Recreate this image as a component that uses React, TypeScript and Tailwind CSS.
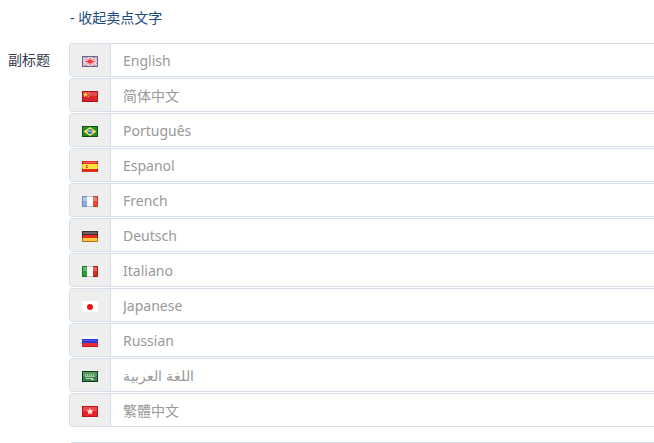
import { useState, type ReactNode } from "react";

type Language = {
  code: string;
  label: string;
  flag: ReactNode;
};

const languages: Language[] = [
  {
    code: "en",
    label: "English",
    flag: (
      <>
        <rect width="16" height="11" fill="#e9e2f0" />
        <path d="M1 1l14 9M15 1L1 10" stroke="#e8a4b0" strokeWidth="1.4" />
        <path d="M3 1.5h3M10 1.5h3M3 9.5h3M10 9.5h3M1.5 3v1M14.5 3v1M1.5 7v1M14.5 7v1" stroke="#a9a3cb" strokeWidth="1" />
        <path d="M1 5.5h14M8 1v9" stroke="#f8c4c8" strokeWidth="2.4" />
        <path d="M3 5.5h10M8 2v7" stroke="#f4484e" strokeWidth="1.2" />
        <path d="M6 4l4 3M10 4L6 7" stroke="#f42c34" strokeWidth="1.4" />
        <rect x=".5" y=".5" width="15" height="10" fill="none" stroke="#6a6590" />
      </>
    ),
  },
  {
    code: "zh-CN",
    label: "简体中文",
    flag: (
      <>
        <rect width="16" height="11" fill="#d8242a" />
        <rect x="1" y="1" width="14" height="4" fill="#e4484a" />
        <path d="M3.5 1l.9 1.6 1.8.2-1.3 1.3.4 1.8-1.8-.9-1.7.9.4-1.8-1.3-1.3 1.7-.2z" fill="#fbc64a" />
        <path d="M6 1h1v1H6zM7 3h1v1H7zM6 5h1v1H6z" fill="#f6b04a" />
        <rect x=".5" y=".5" width="15" height="10" fill="none" stroke="#a8141a" />
      </>
    ),
  },
  {
    code: "pt",
    label: "Português",
    flag: (
      <>
        <rect width="16" height="11" fill="#2c8c2c" />
        <path d="M8 1l6.4 4.5L8 10 1.6 5.5z" fill="#f2ea5c" />
        <circle cx="8" cy="5.5" r="2.5" fill="#3a6cc0" />
        <path d="M6 4.8q2-.3 4 1.2" stroke="#dcecff" strokeWidth=".9" fill="none" />
        <rect x=".5" y=".5" width="15" height="10" fill="none" stroke="#0c560c" />
      </>
    ),
  },
  {
    code: "es",
    label: "Espanol",
    flag: (
      <>
        <rect width="16" height="11" fill="#e02c22" />
        <rect y="3" width="16" height="5" fill="#fce23c" />
        <rect x="1" y="1" width="14" height="1" fill="#ee6656" />
        <path d="M4 4h2v1H5v1h1v1H4z" fill="#c86a28" />
        <path d="M.5 0v3M15.5 0v3M.5 8v3M15.5 8v3" stroke="#b81c1c" />
        <path d="M.5 3v5M15.5 3v5" stroke="#e8b020" />
      </>
    ),
  },
  {
    code: "fr",
    label: "French",
    flag: (
      <>
        <rect width="16" height="11" fill="#fafafa" />
        <rect width="5" height="11" fill="#8caede" />
        <rect x="11" width="5" height="11" fill="#e8503c" />
        <rect x="1" y="1" width="4" height="4" fill="#b0c8ec" />
        <rect x="11" y="1" width="4" height="4" fill="#f07c68" />
        <path d="M5 .5H.5v10H5" stroke="#6a8cc4" fill="none" />
        <path d="M5 .5h6M5 10.5h6" stroke="#c4c4cc" />
        <path d="M11 .5h4.5v10H11" stroke="#c03a2c" fill="none" />
      </>
    ),
  },
  {
    code: "de",
    label: "Deutsch",
    flag: (
      <>
        <rect width="16" height="4" fill="#3c3434" />
        <rect x="1" y="1" width="14" height="2" fill="#6c6464" />
        <rect y="4" width="16" height="3" fill="#e42c20" />
        <rect y="7" width="16" height="4" fill="#fcc83c" />
        <path d="M.5 0v4M15.5 0v4" stroke="#2c2424" />
        <path d="M.5 4v3M15.5 4v3" stroke="#a01c14" />
        <path d="M.5 7v3.5h15V7" stroke="#b0741c" fill="none" />
      </>
    ),
  },
  {
    code: "it",
    label: "Italiano",
    flag: (
      <>
        <rect width="16" height="11" fill="#fafafa" />
        <rect width="5" height="11" fill="#2c9c3c" />
        <rect x="11" width="5" height="11" fill="#d82c2c" />
        <rect x="1" y="1" width="4" height="4" fill="#5cbc64" />
        <rect x="11" y="1" width="4" height="4" fill="#e86058" />
        <path d="M5 .5H.5v10H5" stroke="#187828" fill="none" />
        <path d="M5 .5h6M5 10.5h6" stroke="#c8ccc8" />
        <path d="M11 .5h4.5v10H11" stroke="#a81c1c" fill="none" />
      </>
    ),
  },
  {
    code: "ja",
    label: "Japanese",
    flag: (
      <>
        <rect width="16" height="11" fill="#ffffff" />
        <circle cx="8" cy="6" r="3" fill="#e8100c" />
      </>
    ),
  },
  {
    code: "ru",
    label: "Russian",
    flag: (
      <>
        <rect width="16" height="4" fill="#f6f6f8" />
        <rect y="3" width="16" height="5" fill="#2c34e4" />
        <rect x="1" y="4" width="14" height="1" fill="#585cf0" />
        <rect y="7" width="16" height="4" fill="#e82c34" />
        <path d="M0 10.5h16" stroke="#c41c20" />
      </>
    ),
  },
  {
    code: "ar",
    label: "اللغة العربية",
    flag: (
      <>
        <rect width="16" height="11" fill="#3c8448" />
        <rect x="1" y="1" width="14" height="4" fill="#569a60" />
        <path d="M3.5 3v2M5.5 3v2M7.5 3v2M9.5 3v2M11.5 3v2M3 5.5h10" stroke="#a8d0ac" strokeWidth=".9" />
        <path d="M4 7.5h7M9 8.5h3" stroke="#cce4cc" strokeWidth=".9" />
        <rect x=".5" y=".5" width="15" height="10" fill="none" stroke="#0c3c18" />
      </>
    ),
  },
  {
    code: "zh-TW",
    label: "繁體中文",
    flag: (
      <>
        <rect width="16" height="11" fill="#e4242c" />
        <rect x="1" y="1" width="14" height="4" fill="#ee4a50" />
        <path d="M8 2l1 2.2 2.5.2-1.8 1.6.6 2.4L8 7.2 5.7 8.4 6.3 6 4.5 4.4 7 4.2z" fill="#fce4e0" />
        <rect x=".5" y=".5" width="15" height="10" fill="none" stroke="#b8141c" />
      </>
    ),
  },
];

type LanguageInputProps = {
  language: Language;
  value: string;
  onChange: (value: string) => void;
};

function LanguageInput({ language, value, onChange }: LanguageInputProps) {
  const inputId = `subtitle-${language.code}`;

  return (
    <div className="flex h-[34px] overflow-hidden rounded-l border border-r-0 border-[#d5e0ec]">
      <label
        htmlFor={inputId}
        aria-label={language.label}
        className="flex w-[41px] shrink-0 items-center justify-center border-r border-[#d5e0ec] bg-[#eeeeee] pt-[3px]"
      >
        <svg viewBox="0 0 16 11" className="h-[11px] w-4">
          {language.flag}
        </svg>
      </label>
      <input
        id={inputId}
        type="text"
        value={value}
        placeholder={language.label}
        onChange={(e) => onChange(e.target.value)}
        className="min-w-0 flex-1 bg-white px-3 pt-[2px] text-sm text-[#555555] outline-none placeholder:text-[#999999]"
      />
    </div>
  );
}

export default function App() {
  const [values, setValues] = useState<Record<string, string>>({});

  return (
    <div className="h-screen overflow-hidden bg-white pt-2 font-['Noto_Sans','Noto_Sans_CJK_SC',sans-serif] text-sm text-[#333a4d]">
      <div className="pl-[70px]">
        <a href="#selling-points" className="text-[#1c4a80]">
          - 收起卖点文字
        </a>
      </div>

      <fieldset className="mt-[15px] flex">
        <legend className="float-left w-[69px] shrink-0 pt-[7px] pl-2">
          副标题
        </legend>
        <div className="flex min-w-0 flex-1 flex-col gap-px">
          {languages.map((language) => (
            <LanguageInput
              key={language.code}
              language={language}
              value={values[language.code] ?? ""}
              onChange={(value) =>
                setValues((old) => ({ ...old, [language.code]: value }))
              }
            />
          ))}
        </div>
      </fieldset>

      <div className="mt-[15px] pl-[69px]">
        <input
          type="text"
          aria-label="关键词"
          className="block h-[34px] w-full rounded-l border border-r-0 border-[#d5e0ec] px-3 outline-none"
        />
      </div>
    </div>
  );
}
